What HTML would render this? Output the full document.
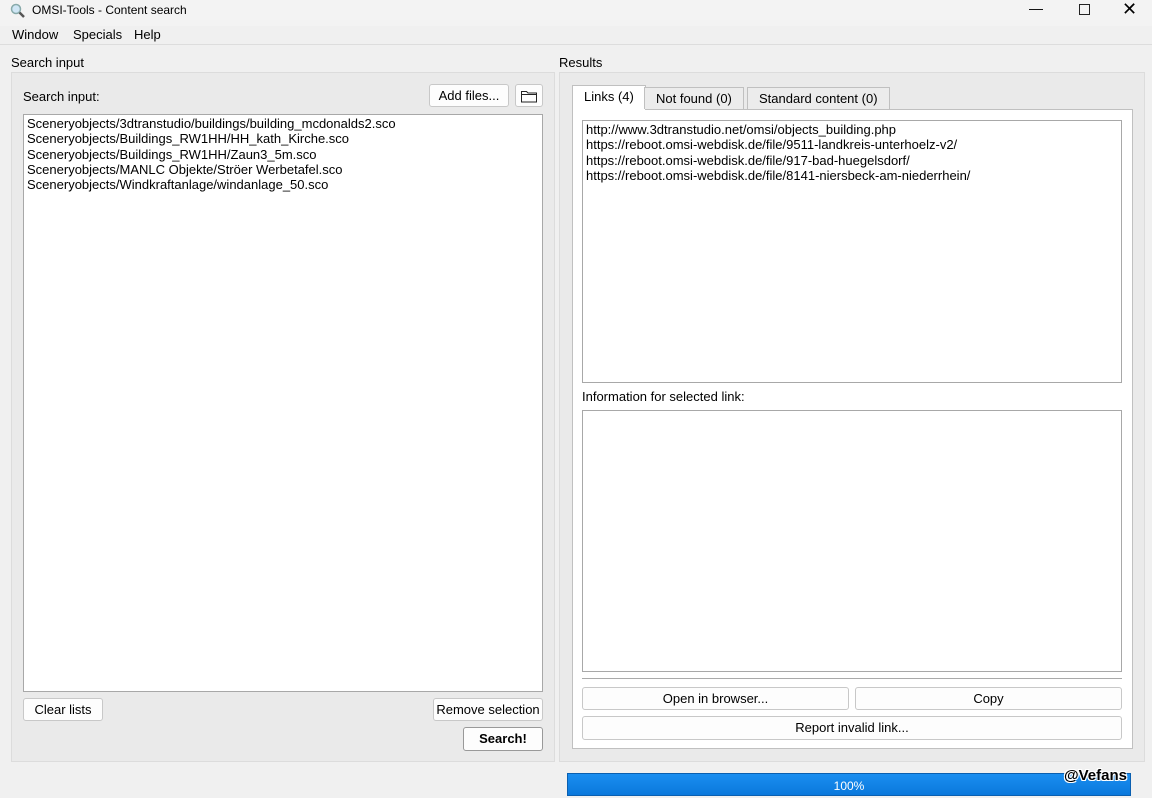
<!DOCTYPE html><html><head><style>
body{margin:0;width:1152px;height:798px;background:#f0f0f0;font-family:"Liberation Sans",sans-serif;font-size:13px;color:#000;position:relative;overflow:hidden}
.a{position:absolute}
.btn{position:absolute;background:#fdfdfd;border:1px solid #c8c8c8;border-radius:3px;box-sizing:border-box;text-align:center;line-height:22px}
.box{position:absolute;background:#fff;border:1px solid #a8a8a8;box-sizing:border-box}
.grp{position:absolute;border:1px solid #dcdcdc;background:#eaeaea;box-sizing:border-box}
.tab{position:absolute;border:1px solid #c0c0c0;border-bottom:none;background:#ececec;box-sizing:border-box;padding:0 11px;line-height:22px}
</style></head><body>
<div class="a" style="left:0;top:0;width:1152px;height:26px;background:#f3f3f3"></div>
<svg class="a" style="left:10px;top:3px" width="16" height="16"><circle cx="6" cy="6" r="4.5" fill="#cfe6f5" stroke="#8aa" stroke-width="1.5"/><line x1="9.5" y1="9.5" x2="14" y2="14" stroke="#555" stroke-width="2.5"/></svg>
<div class="a" style="left:32px;top:3px;font-size:12px">OMSI-Tools - Content search</div>
<div class="a" style="left:1029px;top:0;font-size:14px">&#8212;</div>
<div class="a" style="left:1079px;top:4px;width:9px;height:9px;border:1px solid #222"></div>
<div class="a" style="left:1122px;top:-1px;font-size:18px">&#x2715;</div>
<div class="a" style="left:12px;top:27px">Window</div>
<div class="a" style="left:73px;top:27px">Specials</div>
<div class="a" style="left:134px;top:27px">Help</div>
<div class="a" style="left:0;top:44px;width:1152px;height:1px;background:#ddd"></div>
<div class="a" style="left:11px;top:55px">Search input</div>
<div class="a" style="left:559px;top:55px">Results</div>
<div class="grp" style="left:11px;top:72px;width:544px;height:690px"></div>
<div class="grp" style="left:559px;top:72px;width:586px;height:690px"></div>
<div class="a" style="left:23px;top:89px">Search input:</div>
<div class="btn" style="left:429px;top:84px;width:80px;height:23px">Add files...</div>
<div class="btn" style="left:515px;top:84px;width:28px;height:23px"><svg width="18" height="14" style="margin-top:4px"><path d="M1.5 2.5h5l1.5 1.5h8.5v9h-15z M1.5 5.5h15" fill="none" stroke="#222"/></svg></div>
<div class="box" style="left:23px;top:114px;width:520px;height:578px;padding:1px 3px;line-height:15.3px">Sceneryobjects/3dtranstudio/buildings/building_mcdonalds2.sco<br>Sceneryobjects/Buildings_RW1HH/HH_kath_Kirche.sco<br>Sceneryobjects/Buildings_RW1HH/Zaun3_5m.sco<br>Sceneryobjects/MANLC Objekte/Ströer Werbetafel.sco<br>Sceneryobjects/Windkraftanlage/windanlage_50.sco</div>
<div class="btn" style="left:23px;top:698px;width:80px;height:23px">Clear lists</div>
<div class="btn" style="left:433px;top:698px;width:110px;height:23px">Remove selection</div>
<div class="btn" style="left:463px;top:727px;width:80px;height:24px;font-weight:bold;border-color:#999">Search!</div>
<div class="a" style="left:572px;top:109px;width:561px;height:640px;background:#fff;border:1px solid #c0c0c0;box-sizing:border-box"></div>
<div class="tab" style="left:572px;top:85px;height:25px;background:#fff">Links (4)</div>
<div class="tab" style="left:644px;top:87px;height:22px">Not found (0)</div>
<div class="tab" style="left:747px;top:87px;height:22px">Standard content (0)</div>
<div class="box" style="left:582px;top:120px;width:540px;height:263px;padding:1px 3px;line-height:15.3px">http://www.3dtranstudio.net/omsi/objects_building.php<br>https://reboot.omsi-webdisk.de/file/9511-landkreis-unterhoelz-v2/<br>https://reboot.omsi-webdisk.de/file/917-bad-huegelsdorf/<br>https://reboot.omsi-webdisk.de/file/8141-niersbeck-am-niederrhein/</div>
<div class="a" style="left:582px;top:389px">Information for selected link:</div>
<div class="box" style="left:582px;top:410px;width:540px;height:262px"></div>
<div class="a" style="left:582px;top:678px;width:540px;height:1px;background:#aaa"></div>
<div class="btn" style="left:582px;top:687px;width:267px;height:23px">Open in browser...</div>
<div class="btn" style="left:855px;top:687px;width:267px;height:23px">Copy</div>
<div class="btn" style="left:582px;top:716px;width:540px;height:24px">Report invalid link...</div>
<div class="a" style="left:567px;top:773px;width:564px;height:23px;background:linear-gradient(#1a8ef0,#0a78dc);border:1px solid #0a5fb0;box-sizing:border-box;color:#fff;text-align:center;line-height:24px;font-size:12px">100%</div>
<div class="a" style="left:1064px;top:767px;font-size:15px;font-weight:bold;color:#000;text-shadow:1px 1px #fff,-1px -1px #fff,1px -1px #fff,-1px 1px #fff">@Vefans</div>
</body></html>
